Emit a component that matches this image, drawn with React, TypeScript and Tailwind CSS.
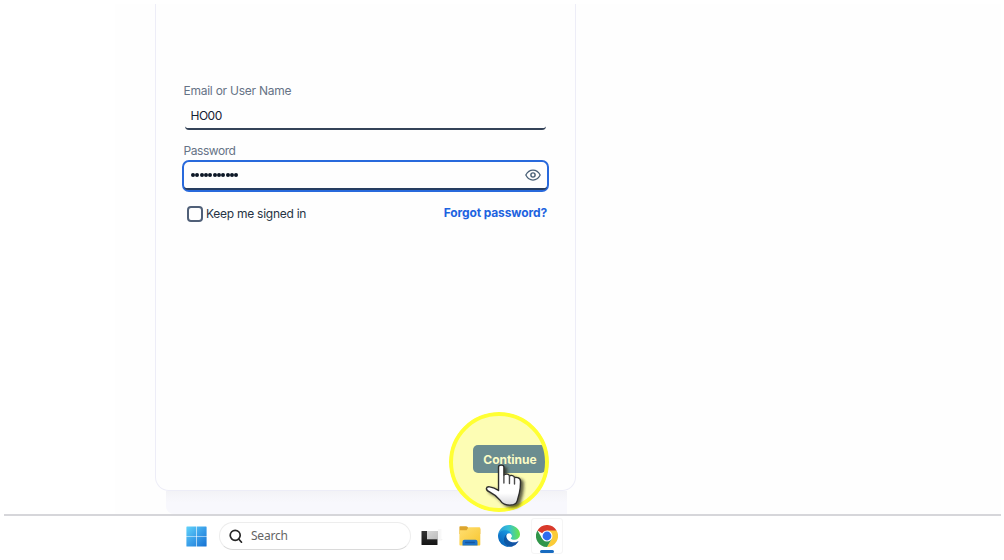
import React from "react";

function EyeIcon() {
  return (
    <svg width="16" height="12" viewBox="0 0 16 12" fill="none" stroke="#475e75" strokeWidth="1.25">
      <path d="M.8 6C2.5 2.7 5 1 8 1s5.500 1.700 7.200 5C13.500 9.300 11 11 8 11S2.500 9.300.8 6Z" strokeLinejoin="round" />
      <circle cx="8" cy="6" r="2.100" strokeWidth="1.400" />
    </svg>
  );
}

function WindowsIcon() {
  return (
    <svg width="21" height="21" viewBox="0 0 21 21">
      <defs>
        <linearGradient id="win" x1="0" y1="0" x2="21" y2="21" gradientUnits="userSpaceOnUse">
          <stop stopColor="#62d5fb" />
          <stop offset="0.5" stopColor="#3a9fe9" />
          <stop offset="1" stopColor="#1470d2" />
        </linearGradient>
      </defs>
      <path fill="url(#win)" d="M1 .4h9.200v9.800H.4V1Q.4.400 1 .4ZM10.800 .4h9.200q.6 0 .6.600v9.200h-9.800ZM.4 10.800h9.800v9.800H1q-.6 0-.6-.6ZM10.800 10.800h9.800v9.200q0 .6-.6.600h-9.200Z" />
    </svg>
  );
}

function SearchIcon() {
  return (
    <svg width="14" height="15" viewBox="0 0 14 15" fill="none" stroke="#262626" strokeWidth="1.700" strokeLinecap="round">
      <circle cx="6.200" cy="6.300" r="5" />
      <path d="m9.900 10.200 2.600 3" />
    </svg>
  );
}

function TaskViewIcon() {
  return (
    <svg width="22" height="17" viewBox="0 0 22 17">
      <defs>
        <linearGradient id="task" x1="0" y1="0" x2="0" y2="1">
          <stop stopColor="#333" />
          <stop offset="1" stopColor="#151515" />
        </linearGradient>
        <linearGradient id="pane" x1="0" y1="0" x2="1" y2="1">
          <stop stopColor="#d8d8d8" />
          <stop offset="1" stopColor="#bcbcbc" />
        </linearGradient>
      </defs>
      <rect x="0.500" y="2" width="16" height="14" rx=".6" fill="url(#task)" />
      <path d="M6 2h11v8.300H6Z" fill="url(#pane)" />
      <path d="M17 0h3.500v10.500H17Z" fill="#f8f8f8" />
      <path d="M17 11h3q1 0 1-1" stroke="#e9e9e9" strokeWidth=".6" fill="none" />
    </svg>
  );
}

function FolderIcon() {
  return (
    <svg width="22" height="20" viewBox="0 0 22 20">
      <defs>
        <linearGradient id="folder" x1="0" y1="0" x2="1" y2="1">
          <stop stopColor="#ffdf72" />
          <stop offset="1" stopColor="#f8c62f" />
        </linearGradient>
      </defs>
      <path d="M.4 1Q.4.200 1.200.200h6q.7 0 1.100.500l1.500 1.500h10.500q1 0 1 1V8H.4Z" fill="#dda52d" />
      <path d="M.4 4.300h7.200L9.500 1.200h10.800q1 0 1 1v16.400q0 .9-.9.900H1.300q-.9 0-.9-.9Z" fill="url(#folder)" />
      <path d="M3.500 19.500v-3.800q0-2 2-2h11q2 0 2 2v3.800Z" fill="#1e74c9" />
      <path d="M6.700 16.500h8.600" stroke="#14569f" strokeWidth="1.300" strokeLinecap="round" />
    </svg>
  );
}

function EdgeIcon() {
  return (
    <svg width="22" height="22" viewBox="0 0 256 256">
      <defs>
        <linearGradient id="edgeBase" x1="64" y1="177" x2="240" y2="177" gradientUnits="userSpaceOnUse">
          <stop stopColor="#0c59a4" />
          <stop offset="1" stopColor="#1552a6" />
        </linearGradient>
        <linearGradient id="edgeMid" x1="150" y1="90" x2="45" y2="220" gradientUnits="userSpaceOnUse">
          <stop stopColor="#1b9de2" />
          <stop offset="0.500" stopColor="#137fd1" />
          <stop offset="1" stopColor="#0868bd" />
        </linearGradient>
        <linearGradient id="edgeTop" x1="10" y1="90" x2="246" y2="80" gradientUnits="userSpaceOnUse">
          <stop stopColor="#2999dc" />
          <stop offset="0.500" stopColor="#36c0d5" />
          <stop offset="1" stopColor="#67e44e" />
        </linearGradient>
      </defs>
      <path fill="url(#edgeBase)" d="M231 190a93 93 0 0 1-10 5 101 101 0 0 1-36 6c-47 0-88-32-88-74a31 31 0 0 1 16-27c-43 2-54 46-54 72 0 74 68 82 83 82 8 0 20-2 27-5l1-1a128 128 0 0 0 67-53 4 4 0 0 0-6-5Z" />
      <path fill="url(#edgeMid)" d="M106 241a79 79 0 0 1-23-21 81 81 0 0 1 30-120c3-1 8-4 16-4a32 32 0 0 1 25 13 32 32 0 0 1 6 18c0 0 25-80-80-80C36 47 0 89 0 126a130 130 0 0 0 12 56 128 128 0 0 0 157 67 75 75 0 0 1-63-8Z" />
      <path fill="url(#edgeTop)" d="M152 149c-1 1-3 2-3 6 0 3 2 6 5 8 14 10 42 9 42 9a60 60 0 0 0 30-8 61 61 0 0 0 30-53c0-22-8-37-11-43C225 28 179 0 128 0A128 128 0 0 0 0 126c1-36 37-66 80-66 4 0 24 0 43 10 16 8 25 18 31 29 7 11 8 26 8 31 0 6-3 14-10 19Z" />
    </svg>
  );
}

function ChromeIcon() {
  return (
    <svg className="shrink-0" width="22" height="22" viewBox="0 0 48 48">
      <path d="M24 24 3.200 12A24 24 0 0 1 44.800 12Z" fill="#d93a2b" />
      <path d="M24 12h20.800A24 24 0 0 1 24 48L34.400 30Z" fill="#fbcb36" />
      <path d="M13.600 30 3.200 12A24 24 0 0 0 24 48l10.400-18Z" fill="#31964a" />
      <circle cx="24" cy="24" r="12" fill="#fff" />
      <circle cx="24" cy="24" r="9.600" fill="#2f6df0" />
    </svg>
  );
}

function PointerHand() {
  return (
    <svg className="absolute left-[483px] top-[462px] overflow-visible" width="45" height="48" viewBox="0 0 42 48" preserveAspectRatio="none">
      <defs>
        <linearGradient id="hand" x1="0" y1="0" x2="0" y2="1">
          <stop stopColor="#fff" />
          <stop offset="0.700" stopColor="#fff" />
          <stop offset="1" stopColor="#d7d7dc" />
        </linearGradient>
        <filter id="handShadow" x="-20%" y="-20%" width="150%" height="150%">
          <feDropShadow dx="2.500" dy="2" stdDeviation="1.500" floodColor="#29291a" floodOpacity=".75" />
        </filter>
      </defs>
      <path
        d="M14.500 5q0-1.800 2.500-1.800T19.500 5v8q1-1 3-.8 1.900.1 2.200 1.800 1-.8 2.800-.4 1.700.4 1.900 2 1-.5 3 .1 2.500.8 2.600 3.400.1 7-1.100 12l-2 8q-.8 2.900-3.500 3.600-4.400 1-8.400-.6-2.500-1-3.700-3.400Q12 33 6.500 30.200 3 28.500 3.200 26.400q.3-1.900 3-1.600 4.400.5 8.300 3.800Z"
        fill="url(#hand)" stroke="#2e2e2c" strokeWidth="1.300" strokeLinejoin="round" filter="url(#handShadow)"
      />
      <path d="M19.500 13v8M24.700 14v7.500M29.400 16v6" stroke="#4b4b4b" strokeWidth="1.300" strokeLinecap="round" />
    </svg>
  );
}

export default function App() {
  return (
    <div className="relative flex h-[560px] w-[1004px] flex-col overflow-hidden bg-white font-[Inter,sans-serif]">
      <main className="ml-1 mr-[3px] mt-1 flex h-[512px] flex-col border-b-2 border-[#d6d6da] bg-[linear-gradient(to_right,#fff_111px,#fefefe_111px)]">
        <section className="ml-[151px] flex h-[487px] w-[421px] shrink-0 flex-col rounded-b-[14px] border-x border-b border-[#ededf7] bg-[#fefefe] pl-[26px] pr-[26px] pt-[78px]">
          <label className="ml-[1.500px] flex h-[18px] items-center text-[12px] tracking-[-0.250px] text-[#667386]">Email or User Name</label>
          <div className="ml-[3px] mt-[3px] flex h-[27px] w-[361px] items-center rounded-[4px] border-b-2 border-[#344358] pl-[5.500px] text-[12px] tracking-[-0.500px] text-[#152133]">HO00</div>
          <label className="ml-[1.500px] mt-[12px] flex h-[18px] items-center text-[12px] tracking-[-0.450px] text-[#667386]">Password</label>
          <div className="flex h-[32px] w-[367px] shrink-0 rounded-[7px] border-2 border-[#2869dc]">
            <div className="flex flex-1 items-center rounded-b-[4px] border-b-2 border-[#263d60] pl-[7px] pr-[6px]">
              <div className="flex flex-1 gap-[0.350px]">
                {Array.from({ length: 11 }, (_, i) => (
                  <span key={i} className="size-[4px] rounded-full bg-[#0c1726]" />
                ))}
              </div>
              <EyeIcon />
            </div>
          </div>
          <div className="mt-[12px] flex h-[20px] w-[365px] items-center pl-[5px] text-[12px] text-[#263344]">
            <span className="size-[16px] rounded-[4px] border-2 border-[#506078]" />
            <span className="ml-[3px] tracking-[-0.260px]">Keep me signed in</span>
            <a className="relative -top-px ml-auto font-bold tracking-[-0.120px] text-[#1d63e0]">Forgot password?</a>
          </div>
        </section>
        <div className="ml-[162px] h-[23px] w-[401px] rounded-bl-lg bg-[linear-gradient(#f3f3f6,#f8f8fd_50%)]" />
      </main>
      <footer className="flex h-[40px] items-center pl-[186px]">
        <WindowsIcon />
        <div className="ml-[12px] flex h-[28px] w-[192px] items-center rounded-full border border-[#ededed] border-b-[#dadada] bg-white pl-[9px]">
          <SearchIcon />
          <span className="ml-[8px] font-['Noto_Sans'] text-[12px] tracking-[-0.220px] text-[#646464]">Search</span>
        </div>
        <div className="ml-[10px] mt-[3px] flex items-center"><TaskViewIcon /></div>
        <div className="ml-[16px]"><FolderIcon /></div>
        <div className="ml-[17px]"><EdgeIcon /></div>
        <div className="ml-[11px] mt-[-1px] flex h-[36px] w-[32px] flex-col items-center rounded-[3px] border border-[#f5f5f5] pt-[6px]">
          <ChromeIcon />
          <span className="mt-[3px] h-[3px] w-[14px] shrink-0 rounded-full bg-[#176bc0]" />
        </div>
      </footer>
      <div className="absolute left-[449px] top-[412px] size-[100px] overflow-hidden rounded-full bg-[#fdfdb4]">
        <button className="absolute left-[24px] top-[33px] h-[28px] w-[73px] rounded-[5px] bg-[#6b8d90] pl-px pt-px text-center text-[12px] font-bold text-[#fcfcc6]">Continue</button>
        <div className="absolute inset-0 rounded-full border-4 border-[#ffff32]" />
      </div>
      <PointerHand />
    </div>
  );
}
